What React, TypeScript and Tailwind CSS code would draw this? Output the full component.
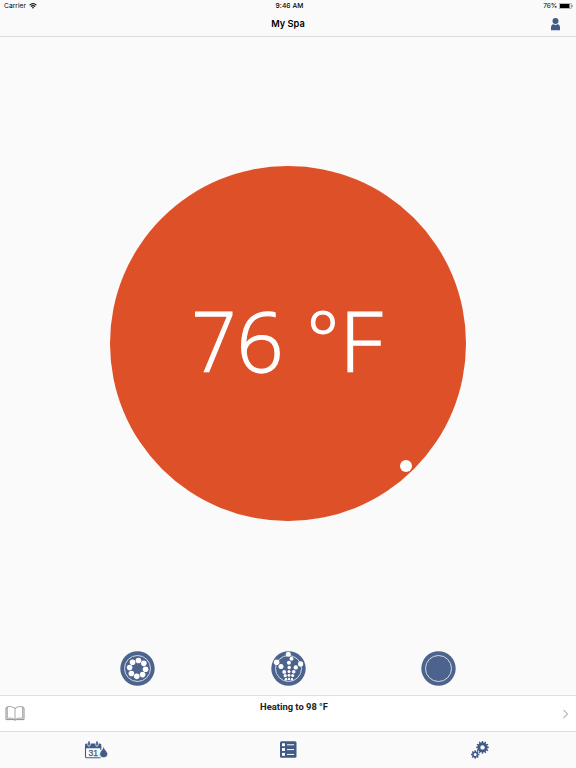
import type { ReactNode } from "react";

const BLUE = "#415a86";

const ringDots = Array.from({ length: 8 }, (_, i) => {
  const a = ((i * 45 + 6) * Math.PI) / 180;
  return { x: 17.6 + 8 * Math.sin(a), y: 17.4 - 8 * Math.cos(a) };
});

// x, y, radius
const jetDots = [
  [17.3, 3.2, 2.5], [5.6, 11.2, 2.8], [29.6, 12.9, 2.6], [20.5, 7.8, 2], [17.9, 11.8, 2],
  [10, 15.6, 2.5], [24.8, 16.4, 2.2], [18.2, 16.5, 1.7], [13.2, 20.9, 1.9], [22.7, 20.7, 1.8],
  [18, 20.6, 1.5], [14.2, 24.7, 1.6], [21.7, 24.6, 1.5], [18, 24.4, 1.4], [15, 28.2, 1.3],
  [21, 28.2, 1.2], [18, 28, 1.2],
];

function gearPath(cx: number, cy: number, outer: number, inner: number, teeth: number) {
  const points: string[] = [];
  const step = (Math.PI * 2) / teeth;
  for (let i = 0; i < teeth; i++) {
    const a = i * step;
    [[-0.3, inner], [-0.2, outer], [0.2, outer], [0.3, inner]].forEach(([t, r]) => {
      points.push(`${cx + r * Math.sin(a + t * step)},${cy - r * Math.cos(a + t * step)}`);
    });
  }
  return `M${points.join("L")}Z`;
}

export default function App() {
  return (
    <div className="flex h-[768px] w-[576px] flex-col overflow-hidden bg-[#fafafa] font-['Inter',sans-serif] text-black">
      <header className="h-[37px] shrink-0 border-b border-[#dcdcdc]">
        <div className="grid h-3 grid-cols-3 items-center pl-1 pr-[3px] text-[6.7px] leading-3">
          <div className="flex items-center gap-[3px]">
            <span className="text-[6.7px]">Carrier</span>
            <WifiIcon />
          </div>
          <span className="pl-[2px] text-center font-medium tracking-[0.05px]">9:46 AM</span>
          <div className="flex items-center justify-end gap-[2px]">
            <span className="tracking-[-0.2px]">76%</span>
            <BatteryIcon />
          </div>
        </div>
        <div className="grid h-6 grid-cols-[1fr_auto_1fr] items-center">
          <span />
          <h1 className="text-[9.2px] font-semibold leading-6">My Spa</h1>
          <UserIcon />
        </div>
      </header>

      <main className="flex grow flex-col items-center">
        <div className="relative mt-[129px] flex h-[355px] w-[356px] shrink-0 items-center justify-center rounded-full bg-[#de5027]">
          <p className="flex translate-x-[-0.5px] translate-y-[-3px] font-['Open_Sans',sans-serif] text-[82.5px] font-light leading-none text-white [-webkit-text-stroke:1.3px_white]">
            <span className="-mr-[2px] origin-left translate-x-[-1px] scale-x-[0.95]">7</span>
            <span className="-ml-[1px]">6</span>
            <span className="ml-[23px] origin-top-left scale-[0.93] translate-y-[1px]">°</span>
            <span className="-ml-[1px] origin-left translate-x-[-2px] scale-x-[1.04]">F</span>
          </p>
          <span className="absolute left-[290px] top-[294px] size-3 rounded-full bg-white" />
        </div>
        <div className="mt-[130px] flex w-full justify-center gap-[115.5px]">
          <SpaButton>
            {ringDots.map((d, i) => <circle key={i} cx={d.x} cy={d.y} r="2.8" fill="#fff" />)}
          </SpaButton>
          <SpaButton>
            {jetDots.map(([x, y, r], i) => <circle key={i} cx={x} cy={y} r={r} fill="#fff" />)}
          </SpaButton>
          <SpaButton />
        </div>
      </main>

      <section className="grid h-9 shrink-0 grid-cols-[1fr_auto_1fr] border-t border-[#dedede] bg-white">
        <BookIcon />
        <p className="ml-3 mt-1 font-['Roboto',sans-serif] text-[9.4px] font-bold leading-[14px] text-[#222]">Heating to 98 °F</p>
        <svg className="mr-[7px] mt-[13px] justify-self-end" width="7" height="10" viewBox="0 0 7 10" fill="none" stroke="#bcbcc0" strokeWidth="1.2">
          <path d="M1.5 1L5.5 5L1.5 9" />
        </svg>
      </section>

      <nav className="grid h-[37px] shrink-0 grid-cols-3 items-center justify-items-center border-t border-[#dcdcdc]">
        <CalendarIcon />
        <ListIcon />
        <GearsIcon />
      </nav>
    </div>
  );
}

function SpaButton({ children }: { children?: ReactNode }) {
  return (
    <svg width="35" height="35" viewBox="0 0 35 35">
      <circle cx="17.5" cy="17.5" r="17.2" fill="#4b638d" />
      <circle cx="17.5" cy="17.5" r="13" fill="none" stroke="#d5dae4" strokeWidth="1" />
      {children}
    </svg>
  );
}

function WifiIcon() {
  return (
    <svg width="8" height="6" viewBox="0 0 8 6" fill="none" stroke="#111">
      <path d="M.6 2.1Q4-.8 7.4 2.1" strokeWidth="1.1" />
      <path d="M1.9 3.5Q4 1.8 6.1 3.5" strokeWidth="1.1" />
      <path d="M4 5.7L2.9 4.5Q4 3.7 5.1 4.5Z" fill="#111" stroke="none" />
    </svg>
  );
}

function BatteryIcon() {
  return (
    <svg width="14" height="6" viewBox="0 0 14 6">
      <rect x=".3" y=".3" width="12" height="5.4" rx=".8" fill="none" stroke="#555" strokeWidth=".5" />
      <rect x="1" y="1" width="9.5" height="4" fill="#000" />
      <path d="M12.9 2v2q.8-.3.8-1t-.8-1Z" fill="#333" />
    </svg>
  );
}

function UserIcon() {
  return (
    <svg className="mr-[15px] justify-self-end" width="11" height="13" viewBox="0 0 11 13" fill={BLUE}>
      <circle cx="5.5" cy="3.1" r="3" />
      <path d="M1 12.3V9.8Q1 6.4 3.6 6.2Q5.5 7.6 7.4 6.2Q10 6.4 10 9.8V12.3Z" />
    </svg>
  );
}

function BookIcon() {
  return (
    <svg className="ml-[5px] mt-[9px]" width="20" height="17" viewBox="0 0 20 17" fill="none" stroke="#8f8f8f" strokeWidth=".8">
      <path d="M10 3.3Q6.5.8 2.3 1.6V13.2Q6.8 12.4 10 14.5Q13.2 12.4 17.7 13.2V1.6Q13.5.8 10 3.3ZM10 3.3V14.5" />
      <path d="M2.3 2.8H1V14.6H8.3Q10 15.7 11.7 14.6H19V2.8H17.7" strokeWidth="1" />
    </svg>
  );
}

function CalendarIcon() {
  return (
    <svg width="24" height="18" viewBox="0 0 24 18">
      <path d="M1 4Q1 2.5 2.4 2.5H15.9Q17.3 2.5 17.3 4V7.2H1Z" fill={BLUE} />
      <path d="M1.5 6V15.4Q1.5 16.8 2.9 16.8H16.5" fill="none" stroke={BLUE} strokeWidth="1.1" />
      <path d="M16.8 6V9" stroke={BLUE} />
      <path d="M5 1.4V4M13 1.4V4" stroke="#fafafa" strokeWidth="3" strokeLinecap="round" />
      <path d="M5 1V4M13 1V4" stroke={BLUE} strokeWidth="1.7" strokeLinecap="round" />
      <text x="9.3" y="15" textAnchor="middle" fontFamily="Liberation Sans, sans-serif" fontSize="8.6" fill={BLUE} stroke={BLUE} strokeWidth=".25">31</text>
      <path d="M19.6 5.5Q20.2 8 22.4 10.3Q24.6 13 22.9 15.2Q21.6 16.6 19.6 16.6Q17.6 16.6 16.4 15.2Q14.7 13 16.8 10.3Q19 8 19.6 5.5Z" fill={BLUE} stroke="#fafafa" strokeWidth=".5" />
    </svg>
  );
}

function ListIcon() {
  return (
    <svg className="translate-y-[-1px]" width="17" height="17" viewBox="0 0 17 17">
      <rect x="0" y=".3" width="16.5" height="16.5" rx="1.5" fill={BLUE} />
      {[2.3, 7.1, 11.9].map((y) => (
        <g key={y} fill="#fff">
          <rect x="2" y={y} width="3" height="2.9" />
          <rect x="7" y={y + 1} width="7.1" height="1" />
        </g>
      ))}
    </svg>
  );
}

function GearsIcon() {
  return (
    <svg width="18" height="18" viewBox="0 0 18 18" fill={BLUE}>
      <path d={gearPath(11.5, 6.4, 6.4, 5, 12)} />
      <circle cx="11.5" cy="6.4" r="2.2" fill="#fafafa" />
      <path d={gearPath(4.2, 13.5, 4.3, 3.2, 8)} />
      <circle cx="4.2" cy="13.5" r="1.5" fill="#fafafa" />
    </svg>
  );
}
